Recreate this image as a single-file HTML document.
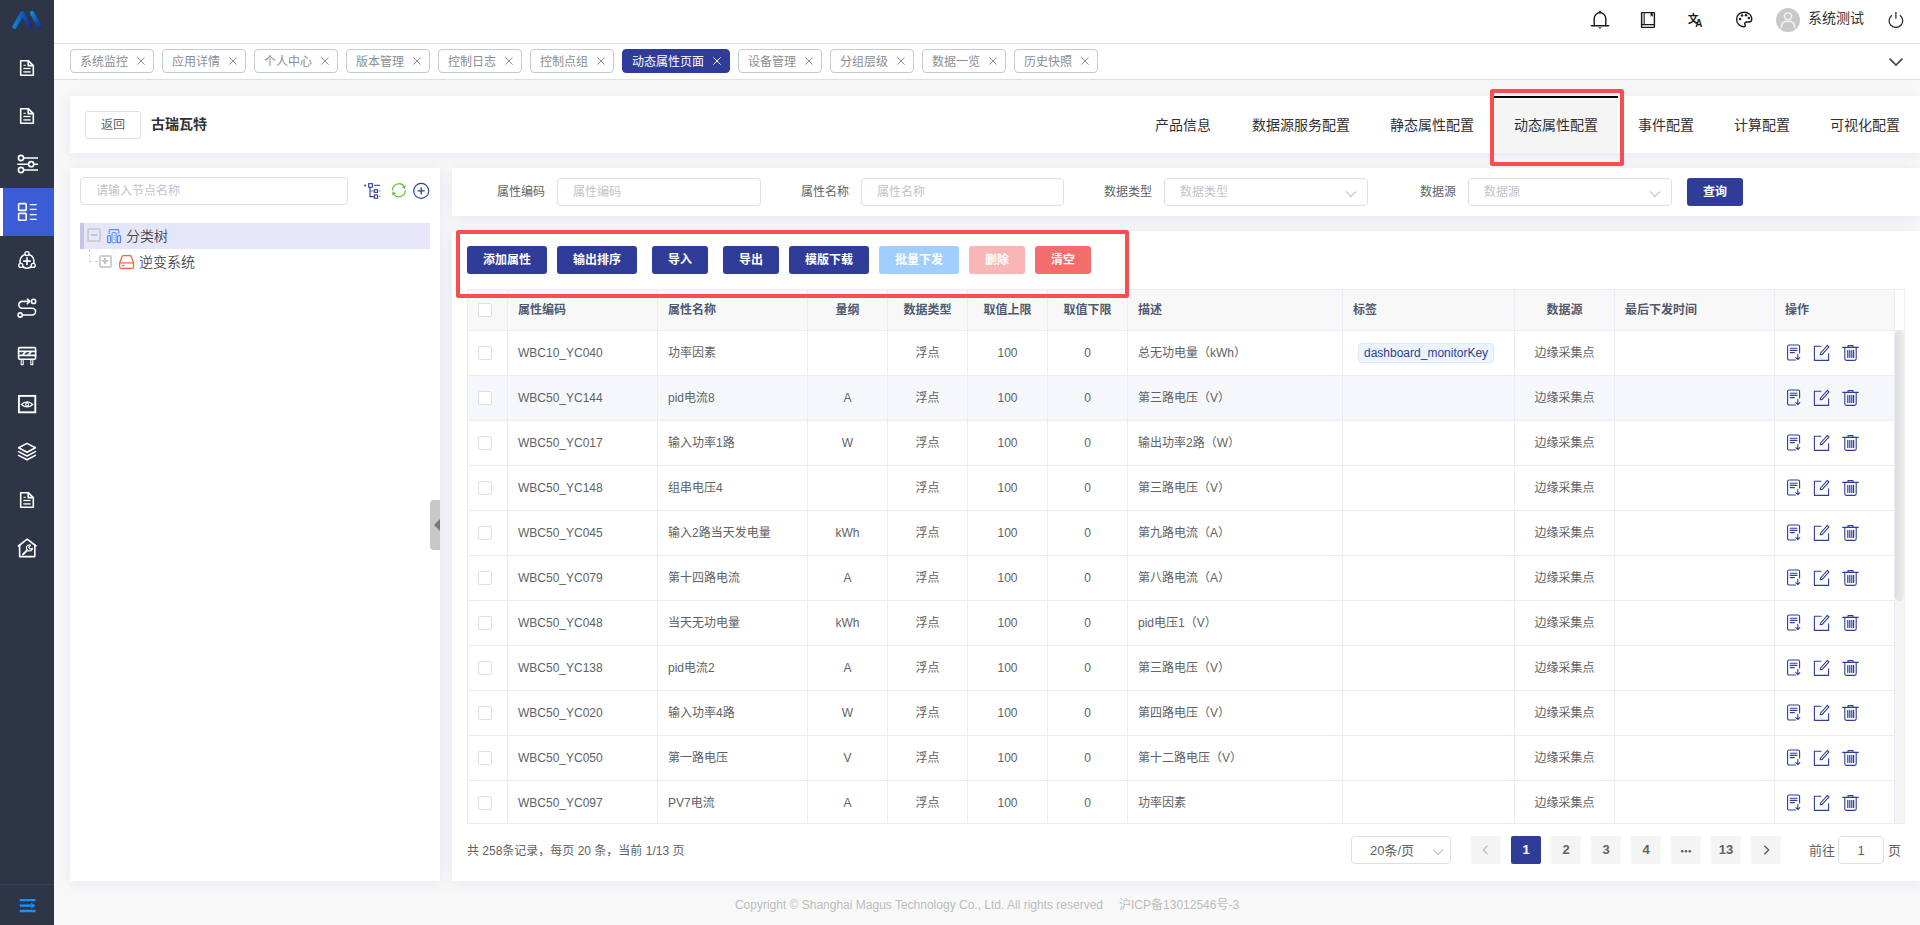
<!DOCTYPE html>
<html lang="zh-CN">
<head>
<meta charset="utf-8">
<title>动态属性配置</title>
<style>
*{box-sizing:border-box;margin:0;padding:0}
html,body{width:1920px;height:925px;overflow:hidden}
body{position:relative;background:#f8f8f9;font-family:"Liberation Sans","Noto Sans CJK SC",sans-serif;font-size:12px;color:#606266}
svg{display:block}
b{font-weight:normal}
i,em,s,u{font-style:normal;text-decoration:none}

/* sidebar */
.side{position:absolute;left:0;top:0;width:54px;height:925px;background:#2d3546}
.logo{position:absolute;left:12px;top:9px}
.mi{position:absolute;left:0;width:54px;height:48px}
.mi svg{position:absolute;left:16px;top:13px}
.mi.act{background:#3c5cd6;border-left:3px solid #fff}
.mi.act svg{left:13px}
.sfoot{position:absolute;left:0;top:884px;width:54px;height:41px;border-top:1px solid #37445f}
.sfoot svg{position:absolute;left:19px;top:13px}

/* top */
.top{position:absolute;left:54px;top:0;width:1866px;height:44px;background:#fff;border-bottom:1px solid #dce3f0}
.ti{position:absolute;top:9px;width:20px;height:20px;margin-left:-54px}
.avatar{position:absolute;left:1722px;top:8px;width:24px;height:24px;border-radius:50%;background:#c9c9c9;overflow:hidden}
.uname{position:absolute;left:1754px;top:8px;font-size:14px;line-height:20px;color:#303133}

/* tags */
.tags{position:absolute;left:54px;top:44px;width:1866px;height:36px;background:#fff;border-bottom:1px solid #dce3f0}
.tag{position:absolute;top:5px;height:24px;margin-left:-54px;border:1px solid #c6c9d0;border-radius:4px;background:#fff;color:#8c8e93;font-size:12px;line-height:24px;padding-left:9px;white-space:nowrap}
.tag i{position:absolute;right:7px;top:6px}
.tag.on{background:#2f3d99;border-color:#2f3d99;color:#fff}
.tagmore{position:absolute;left:1834px;top:13px}

/* cards */
.card{position:absolute;background:#fff;box-shadow:0 2px 12px 0 rgba(150,160,200,.18)}
.hcard{left:70px;top:96px;width:1850px;height:57px}
.back{position:absolute;left:15px;top:15px;width:56px;height:28px;border:1px solid #dcdfe6;border-radius:3px;text-align:center;line-height:26px;font-size:12px;color:#606266}
.ptitle{position:absolute;left:81px;top:17px;font-size:14px;line-height:22px;font-weight:bold;color:#303133}
.ptab{position:absolute;top:0;height:57px;line-height:58px;text-align:center;font-size:14px;color:#303133;margin-left:-70px}
.ptab.on{background:linear-gradient(#fff,#fff 1px,#f5f5f5 1px);border-top:2px solid #000;line-height:54px}

.lpanel{left:70px;top:168px;width:370px;height:713px}
.inp{position:absolute;height:28px;border:1px solid #dcdfe6;border-radius:4px;background:#fff;color:#c0c4cc;font-size:12px;line-height:27px;padding-left:15px;white-space:nowrap}
.tsearch{left:10px;top:9px;width:268px}
.tic{position:absolute}
.trow{position:absolute;height:26px;line-height:26px;font-size:14px;color:#484848;font-weight:350}
.trow svg{position:absolute}
.trow span{position:absolute;white-space:nowrap}
.root{left:10px;top:55px;width:350px;background:#e6e6fa;border-left:4px solid #c5c5e6}
.root svg{left:23px;top:5.8px}
.root span{left:42px;top:0}
.child{left:10px;top:81px;width:350px}
.child svg{left:38.5px;top:5.5px}
.child span{left:59px;top:0}
.tg{position:absolute;width:14px;height:14px;border:2px solid #cfcfcf;border-radius:2px}
.tg:before{content:"";position:absolute;left:2px;top:4px;width:6px;height:2px;background:#c4c4c4}
.tg.pl:after{content:"";position:absolute;left:4px;top:2px;width:2px;height:6px;background:#c4c4c4}
.root .tg{left:2.5px;top:5px}
.child .tg{left:18.5px;top:5.5px;width:13.5px;height:13.5px;background:#fff}
.child .tg:before{left:1.8px;top:3.8px}
.child .tg.pl:after{left:3.8px;top:1.8px}
.tline{position:absolute;left:19px;top:81px;width:9px;height:13px;border-left:1px dashed #d4d4d4;border-bottom:1px dashed #d4d4d4}
.handle{position:absolute;left:360px;top:332px;width:10px;height:50px;background:#c8c8c8;border-radius:4px 0 0 4px}
.handle s{position:absolute;left:4px;top:19px;border:6px solid transparent;border-left:0;border-right:6px solid #7a7a7a}

.fcard{left:452px;top:168px;width:1468px;height:48px}
.fcard label{position:absolute;top:10px;height:28px;line-height:29px;text-align:right;font-size:12px;color:#606266}
.fcard .inp{top:10px}
.sel svg{position:absolute;right:10px;top:10.5px}
.psize svg{right:6.5px;top:11px}
.btn{position:absolute;height:28px;border-radius:3px;color:#fff;font-size:12px;font-weight:bold;line-height:29px;text-align:center}
.pri{background:#2f3d99}
.lblue{background:#a0cfff}
.lred{background:#fab6b6}
.btn.red{background:#f56c6c}

.tcard{left:452px;top:231px;width:1468px;height:650px}
.twrap{position:absolute;left:15px;top:58px;width:1438px;height:535px;overflow:hidden;border:1px solid #eaedf6}
table{border-collapse:separate;border-spacing:0;table-layout:fixed;width:1427px;font-size:12px;color:#606266}
th,td{border-right:1px solid #eaedf6;border-bottom:1px solid #eaedf6;padding:0 10px;text-align:left;white-space:nowrap;overflow:hidden;vertical-align:middle}
th{height:41px;padding-bottom:2px;background:#f8f8f9;color:#515a6e;font-weight:bold}
td{height:45px}
tr.hov td{background:#f5f7fa}
.c{text-align:center}
.z{position:relative;top:0;line-height:0}
th .z{top:1px}
th:first-child,td:first-child{padding:0}
.cb{display:block;width:14px;height:14px;border:1px solid #dcdfe6;border-radius:2px;background:#fff;margin:0 0 0 10px}
.chip{display:inline-block;height:20px;line-height:18px;padding:0 5px;border:1px solid #d9ecff;border-radius:3px;background:#ecf5ff;color:#2f3d99;font-size:12px;margin-left:5px}
td.op{padding:0 0 0 11px}
td.op svg{display:inline-block;vertical-align:middle;margin-right:11px}
td.op svg+svg{margin-right:12px}
.vbar{position:absolute;left:1443px;top:99px;width:9px;height:493px;background:#f5f5f5;border-top:1px solid #eaedf6}
.vbar s{position:absolute;left:0;top:0;width:9px;height:270px;background:linear-gradient(90deg,#dedede,#ececec);border-radius:5px}

.pager{position:absolute;left:0;top:605px;width:1468px;height:28px}
.ptotal{position:absolute;left:15px;top:1px;line-height:28px;font-size:12px;color:#606266}
.psize{left:899px;top:0;width:100px;font-size:13px;color:#606266;padding-left:18px}
.pb{position:absolute;top:0;width:30px;height:28px;border-radius:2px;background:#f4f4f5;color:#606266;font-size:13px;font-weight:bold;line-height:28px;text-align:center}
.pb svg{margin:8px auto 0}
.pb.cur{background:#2f3d99;color:#fff}
.pgo{position:absolute;left:1357px;top:1px;line-height:28px;font-size:13px;color:#606266}
.pgin{left:1386px;top:0;width:46px;padding:0;text-align:center;color:#606266;font-size:13px}
.pgy{position:absolute;left:1436px;top:1px;line-height:28px;font-size:13px;color:#606266}

.anno{position:absolute;border:4px solid #f84e50;border-radius:2.5px}
.foot{position:absolute;left:54px;top:895px;width:1866px;text-align:center;font-size:12px;line-height:20px;color:#bcbcbc;white-space:nowrap}
.foot span{margin-left:16px}
</style>
</head>
<body>
<div class="side">
<div class="logo"><svg width="32" height="24" viewBox="0 0 32 24" ><defs><linearGradient id="lg1" gradientUnits="userSpaceOnUse" x1="2" y1="18" x2="19" y2="18"><stop offset="0" stop-color="#0a8ade"/><stop offset=".45" stop-color="#0f5cc0"/><stop offset="1" stop-color="#1a2a90"/></linearGradient><linearGradient id="lg2" gradientUnits="userSpaceOnUse" x1="19" y1="4" x2="29" y2="18"><stop offset="0" stop-color="#0a8ade"/><stop offset="1" stop-color="#1a2a90"/></linearGradient></defs><path d="M2.6 17.6 L10.4 4.2 L18.6 17.8" fill="none" stroke="url(#lg1)" stroke-width="4.3" stroke-linecap="round" stroke-linejoin="round"/><path d="M19.9 4 L27.9 18" fill="none" stroke="url(#lg2)" stroke-width="4.3" stroke-linecap="round"/></svg></div>
<div class="mi" style="top:44px"><svg width="22" height="22" viewBox="0 0 22 22" ><path d="M4.7 3.7 H12.2 L17.3 8.6 V18.3 H4.7 Z" fill="none" stroke="#fff" stroke-width="1.6" stroke-linecap="round" stroke-linejoin="round" stroke-width="1.35"/><path d="M12.2 3.7 V8.6 H17.3" fill="none" stroke="#fff" stroke-width="1.6" stroke-linecap="round" stroke-linejoin="round" stroke-width="1.1"/><path d="M7.4 8.3 H10" stroke="#fff" stroke-width="1.2" opacity=".75"/><path d="M7.4 11.5 H14.6" stroke="#fff" stroke-width="1.3"/><path d="M7.4 14.9 H14.6" stroke="#fff" stroke-width="1.8" opacity=".75"/></svg></div>
<div class="mi" style="top:92px"><svg width="22" height="22" viewBox="0 0 22 22" ><path d="M4.7 3.7 H12.2 L17.3 8.6 V18.3 H4.7 Z" fill="none" stroke="#fff" stroke-width="1.6" stroke-linecap="round" stroke-linejoin="round" stroke-width="1.35"/><path d="M12.2 3.7 V8.6 H17.3" fill="none" stroke="#fff" stroke-width="1.6" stroke-linecap="round" stroke-linejoin="round" stroke-width="1.1"/><path d="M7.4 8.3 H10" stroke="#fff" stroke-width="1.2" opacity=".75"/><path d="M7.4 11.5 H14.6" stroke="#fff" stroke-width="1.3"/><path d="M7.4 14.9 H14.6" stroke="#fff" stroke-width="1.8" opacity=".75"/></svg></div>
<div class="mi" style="top:140px"><svg width="22" height="22" viewBox="0 0 22 22" ><g fill="none" stroke="#fff" stroke-width="1.6" stroke-linecap="round" stroke-linejoin="round"><circle cx="5" cy="5" r="2.6"/><path d="M7.8 5 H21.6"/><circle cx="15.2" cy="11.2" r="2.6"/><path d="M1.8 11.2 H12.4 M18 11.2 H21.6"/><circle cx="5" cy="17" r="2.6"/><path d="M7.8 17 H21.6"/></g></svg></div>
<div class="mi act" style="top:188px"><svg width="22" height="22" viewBox="0 0 22 22" ><g fill="none" stroke="#fff" stroke-width="1.6" stroke-linecap="round" stroke-linejoin="round"><rect x="2.6" y="2.6" width="7.6" height="6.8" rx="0.8"/><rect x="2.6" y="12.4" width="7.6" height="6.8" rx="0.8"/></g><path d="M13.8 3.6 H20.6 M13.8 8.4 H20.6 M13.8 13.6 H20.6 M13.8 18.4 H20.6" stroke="#fff" stroke-width="1.4"/></svg></div>
<div class="mi" style="top:236px"><svg width="22" height="22" viewBox="0 0 22 22" ><g fill="none" stroke="#fff" stroke-width="1.6" stroke-linecap="round" stroke-linejoin="round" stroke-width="1.5"><circle cx="11" cy="12.2" r="7"/><path d="M11 8.8 V15.4 M7.7 12.1 H14.3"/></g><g fill="#2d3548" stroke="#fff" stroke-width="1.4"><circle cx="11" cy="4.6" r="2"/><circle cx="4.8" cy="16.4" r="2"/><circle cx="17.2" cy="16.4" r="2"/></g></svg></div>
<div class="mi" style="top:284px"><svg width="22" height="22" viewBox="0 0 22 22" ><g fill="none" stroke="#fff" stroke-width="1.6" stroke-linecap="round" stroke-linejoin="round"><path d="M6.4 18 H16.2 A3.4 3.4 0 0 0 16.2 11.2 H6.2 A3.4 3.4 0 0 1 6.2 4.4 H13.4"/><path d="M11.4 2.2 L13.8 4.4 L11.4 6.6"/><circle cx="4.2" cy="18" r="2.1"/><circle cx="17.6" cy="4.4" r="2.1"/></g></svg></div>
<div class="mi" style="top:332px"><svg width="22" height="22" viewBox="0 0 22 22" ><g fill="none" stroke="#fff" stroke-width="1.6" stroke-linecap="round" stroke-linejoin="round" stroke-width="1.5"><rect x="2.6" y="2.6" width="17" height="11.6" rx="1.2"/><path d="M2.6 6.4 H19.6 M2.6 10.4 H19.6"/><path d="M6.4 10.2 L9.6 6.6 M12 10.2 L15.2 6.6"/><path d="M5.2 14.4 V19.6 H7.2 V14.4 M14.8 14.4 V19.6 H16.8 V14.4" stroke-width="1.1"/></g></svg></div>
<div class="mi" style="top:380px"><svg width="22" height="22" viewBox="0 0 22 22" ><rect x="2.9" y="2.9" width="16.4" height="16.4" fill="none" stroke="#fff" stroke-width="1.9"/><path d="M5.4 11.4 Q11 6.4 16.8 11.4 Q11 16.2 5.4 11.4 Z" fill="none" stroke="#fff" stroke-width="1.3"/><circle cx="11.1" cy="11.4" r="1.5" fill="none" stroke="#fff" stroke-width="1.1"/></svg></div>
<div class="mi" style="top:428px"><svg width="22" height="22" viewBox="0 0 22 22" ><g fill="none" stroke="#fff" stroke-width="1.6" stroke-linecap="round" stroke-linejoin="round" stroke-width="1.4"><path d="M11 2.4 L19.4 6.8 L11 11.2 L2.6 6.8 Z"/><path d="M2.6 10.6 L11 15 L19.4 10.6"/><path d="M2.6 14.4 L11 18.8 L19.4 14.4"/></g></svg></div>
<div class="mi" style="top:476px"><svg width="22" height="22" viewBox="0 0 22 22" ><path d="M4.7 3.7 H12.2 L17.3 8.6 V18.3 H4.7 Z" fill="none" stroke="#fff" stroke-width="1.6" stroke-linecap="round" stroke-linejoin="round" stroke-width="1.35"/><path d="M12.2 3.7 V8.6 H17.3" fill="none" stroke="#fff" stroke-width="1.6" stroke-linecap="round" stroke-linejoin="round" stroke-width="1.1"/><path d="M7.4 8.3 H10" stroke="#fff" stroke-width="1.2" opacity=".75"/><path d="M7.4 11.5 H14.6" stroke="#fff" stroke-width="1.3"/><path d="M7.4 14.9 H14.6" stroke="#fff" stroke-width="1.8" opacity=".75"/></svg></div>
<div class="mi" style="top:524px"><svg width="22" height="22" viewBox="0 0 22 22" ><g fill="none" stroke="#fff" stroke-width="1.6" stroke-linecap="round" stroke-linejoin="round" stroke-width="1.5"><path d="M2.4 9 L11.2 2.2 L20 9"/><path d="M3.6 8.4 V19.6 H18.8 V8.4"/><path d="M7 17.4 L11.2 13.2" stroke-width="2"/><path d="M14.6 8.2 A3 3 0 1 0 16.4 11.4 L14 12 L12.8 10.4 Z" stroke-width="1.2"/></g></svg></div>
<div class="sfoot"><svg width="17" height="16" viewBox="0 0 17 16" ><path d="M0.8 2.1 H16.6 M0.8 13 H16.6" stroke="#1890ff" stroke-width="2.4"/><path d="M0.8 7.6 H12" stroke="#1890ff" stroke-width="2.4"/><path d="M12.2 4.8 L16.6 7.6 L12.2 10.4 Z" fill="#1890ff"/></svg></div>
</div>
<div class="top">
<span class="ti" style="left:1590px"><svg width="20" height="22" viewBox="0 0 20 22" ><g fill="none" stroke="#1a1a1a" stroke-width="1.4" stroke-linejoin="round" stroke-linecap="round"><path d="M4.2 16.6 V9.6 A5.8 5.8 0 0 1 15.8 9.6 V16.6"/><path d="M1.4 16.8 H18.6"/></g><path d="M9 3.2 L10 1.8 L11 3.2 Z" fill="#1a1a1a" stroke="#1a1a1a" stroke-width=".8"/><path d="M8.6 18.6 H11.4 L10 19.8 Z" fill="#555" stroke="#555" stroke-width=".6"/></svg></span>
<span class="ti" style="left:1638px"><svg width="20" height="22" viewBox="0 0 20 22" ><g fill="none" stroke="#1a1a1a" stroke-width="1.4" stroke-linejoin="round" stroke-linecap="round" stroke-width="1.2"><rect x="3.6" y="3.6" width="12.8" height="14.8" rx=".6"/><path d="M3.6 15.6 H16.4"/><path d="M6.2 3.6 V15.6" stroke-width="1"/></g><path d="M4.4 4.2 H5.8 V15 H4.4 Z" fill="#999"/><path d="M12.6 3.6 H14.8 V8 L13.7 6.4 L12.6 8 Z" fill="#1a1a1a"/></svg></span>
<span class="ti" style="left:1686px"><svg width="20" height="22" viewBox="0 0 20 22" ><text x="1.8" y="13.6" font-family="Liberation Sans,Noto Sans CJK SC,sans-serif" font-size="10.8" font-weight="bold" fill="#1a1a1a">文</text><text x="0" y="0" transform="translate(9.2 17.7) scale(.9 1)" font-family="Liberation Sans,sans-serif" font-size="11" font-weight="bold" fill="#1a1a1a">A</text></svg></span>
<span class="ti" style="left:1734px"><svg width="20" height="22" viewBox="0 0 20 22" ><path d="M10.2 3.2 C5.6 3.2 2.6 6.4 2.6 10.2 C2.6 14.6 6 17.6 9.6 17.8 C11.4 17.9 11.6 16.6 11 15.6 C10.2 14.2 11 13 12.6 13 H15 C16.8 13 17.8 11.6 17.8 9.8 C17.8 6.2 14.6 3.2 10.2 3.2 Z" fill="none" stroke="#1a1a1a" stroke-width="1.4" stroke-linejoin="round" stroke-linecap="round" stroke-width="1.3"/><g fill="#1a1a1a"><circle cx="6" cy="10" r="1.25"/><circle cx="8" cy="6.6" r="1.25"/><circle cx="12" cy="6.2" r="1.25"/><circle cx="14.8" cy="9" r="1.25"/></g></svg></span>
<span class="avatar"><svg width="24" height="24" viewBox="0 0 24 24" ><g fill="none" stroke="#f2f2f2" stroke-width="1.6"><circle cx="12" cy="8.3" r="3.5"/><path d="M5.4 20 C5.4 15 8 13 12 13 C16 13 18.6 15 18.6 20"/></g></svg></span>
<span class="uname">系统测试</span>
<span class="ti" style="left:1886px"><svg width="20" height="22" viewBox="0 0 20 22" ><g fill="none" stroke="#2a2a2a" stroke-width="1.25" stroke-linecap="butt"><path d="M13.9 6.2 A6.8 6.8 0 1 1 5.9 6.2"/><path d="M9.9 3.1 V9.8"/></g></svg></span>
</div>
<div class="tags">
<span class="tag" style="left:70px;width:84px"><b>系统监控</b><i><svg width="10" height="10" viewBox="0 0 10 10" ><path d="M1.4 1.4 L8.6 8.6 M8.6 1.4 L1.4 8.6" stroke="currentColor" stroke-width="1" fill="none"/></svg></i></span>
<span class="tag" style="left:162px;width:84px"><b>应用详情</b><i><svg width="10" height="10" viewBox="0 0 10 10" ><path d="M1.4 1.4 L8.6 8.6 M8.6 1.4 L1.4 8.6" stroke="currentColor" stroke-width="1" fill="none"/></svg></i></span>
<span class="tag" style="left:254px;width:84px"><b>个人中心</b><i><svg width="10" height="10" viewBox="0 0 10 10" ><path d="M1.4 1.4 L8.6 8.6 M8.6 1.4 L1.4 8.6" stroke="currentColor" stroke-width="1" fill="none"/></svg></i></span>
<span class="tag" style="left:346px;width:84px"><b>版本管理</b><i><svg width="10" height="10" viewBox="0 0 10 10" ><path d="M1.4 1.4 L8.6 8.6 M8.6 1.4 L1.4 8.6" stroke="currentColor" stroke-width="1" fill="none"/></svg></i></span>
<span class="tag" style="left:438px;width:84px"><b>控制日志</b><i><svg width="10" height="10" viewBox="0 0 10 10" ><path d="M1.4 1.4 L8.6 8.6 M8.6 1.4 L1.4 8.6" stroke="currentColor" stroke-width="1" fill="none"/></svg></i></span>
<span class="tag" style="left:530px;width:84px"><b>控制点组</b><i><svg width="10" height="10" viewBox="0 0 10 10" ><path d="M1.4 1.4 L8.6 8.6 M8.6 1.4 L1.4 8.6" stroke="currentColor" stroke-width="1" fill="none"/></svg></i></span>
<span class="tag on" style="left:622px;width:108px"><b>动态属性页面</b><i><svg width="10" height="10" viewBox="0 0 10 10" ><path d="M1.4 1.4 L8.6 8.6 M8.6 1.4 L1.4 8.6" stroke="currentColor" stroke-width="1" fill="none"/></svg></i></span>
<span class="tag" style="left:738px;width:84px"><b>设备管理</b><i><svg width="10" height="10" viewBox="0 0 10 10" ><path d="M1.4 1.4 L8.6 8.6 M8.6 1.4 L1.4 8.6" stroke="currentColor" stroke-width="1" fill="none"/></svg></i></span>
<span class="tag" style="left:830px;width:84px"><b>分组层级</b><i><svg width="10" height="10" viewBox="0 0 10 10" ><path d="M1.4 1.4 L8.6 8.6 M8.6 1.4 L1.4 8.6" stroke="currentColor" stroke-width="1" fill="none"/></svg></i></span>
<span class="tag" style="left:922px;width:84px"><b>数据一览</b><i><svg width="10" height="10" viewBox="0 0 10 10" ><path d="M1.4 1.4 L8.6 8.6 M8.6 1.4 L1.4 8.6" stroke="currentColor" stroke-width="1" fill="none"/></svg></i></span>
<span class="tag" style="left:1014px;width:84px"><b>历史快照</b><i><svg width="10" height="10" viewBox="0 0 10 10" ><path d="M1.4 1.4 L8.6 8.6 M8.6 1.4 L1.4 8.6" stroke="currentColor" stroke-width="1" fill="none"/></svg></i></span>
<span class="tagmore"><svg width="16" height="10" viewBox="0 0 16 10" ><path d="M1.6 1.6 L8 8 L14.4 1.6" stroke="#444" stroke-width="1.6" fill="none"/></svg></span>
</div>
<div class="card hcard">
<span class="back">返回</span><span class="ptitle">古瑞瓦特</span>
<span class="ptab" style="left:1103px;width:160px">产品信息</span>
<span class="ptab" style="left:1221px;width:160px">数据源服务配置</span>
<span class="ptab" style="left:1352px;width:160px">静态属性配置</span>
<span class="ptab on" style="left:1494px;width:124px">动态属性配置</span>
<span class="ptab" style="left:1586px;width:160px">事件配置</span>
<span class="ptab" style="left:1682px;width:160px">计算配置</span>
<span class="ptab" style="left:1785px;width:160px">可视化配置</span>
</div>
<div class="card lpanel">
<span class="inp tsearch">请输入节点名称</span>
<span class="tic" style="left:292px;top:13px"><svg width="20" height="20" viewBox="0 0 20 20" ><g fill="none" stroke="#2f3d99" stroke-width="1.1"><rect x="6.65" y="2.65" width="3.7" height="3.6"/><rect x="12.25" y="8.75" width="3.3" height="2.6"/><rect x="12.25" y="13.95" width="3.3" height="3.3"/><path d="M8 6.6 V15.6 H11.8"/><path d="M8 10 H11.8" opacity=".6"/><path d="M11.9 4.3 H18.2" stroke-width="1"/></g><circle cx="17.8" cy="10" r=".6" fill="#2f3d99"/><circle cx="17.8" cy="15.5" r=".6" fill="#2f3d99"/><path d="M1.8 3.8 H4.5 L3.15 6 Z" fill="#2f3d99"/></svg></span>
<span class="tic" style="left:320px;top:13px"><svg width="18" height="20" viewBox="0 0 18 20" ><g fill="none" stroke="#6fc23e" stroke-width="1.25" stroke-linecap="round"><path d="M2.5 9 A6.4 6.4 0 0 1 14.2 5.6"/><path d="M15.3 9.6 A6.4 6.4 0 0 1 3.6 13"/></g><path d="M15.8 4.2 L15.2 8 L11.6 6.4 Z" fill="#6fc23e"/><path d="M2 14.4 L2.6 10.6 L6.2 12.2 Z" fill="#6fc23e"/></svg></span>
<span class="tic" style="left:342px;top:14px"><svg width="18" height="18" viewBox="0 0 18 18" ><g fill="none" stroke="#2f3d99" stroke-width="1.15"><circle cx="9.2" cy="8.9" r="7.5"/><path d="M9.2 5.5 V12.4 M5.6 8.9 H12.7" stroke-width="1.3"/></g></svg></span>
<div class="trow root"><em class="tg minus"></em><svg width="15" height="15" viewBox="0 0 15 15" ><g fill="none" stroke-width="1.2" stroke-linejoin="round"><path d="M2.2 5 V1.6 Q2.2 .7 3.1 .7 H10.9 Q11.8 .7 11.8 1.6 V5" stroke="#5a8dff"/><rect x=".6" y="6.6" width="3" height="7" rx=".9" stroke="#4d84ff"/><rect x="10.5" y="6.6" width="3" height="7" rx=".9" stroke="#4d84ff"/><rect x="5" y="3.6" width="4.2" height="10" rx=".9" stroke="#6f9bff"/></g><path d="M6.2 6.3 H8 M6.2 8.4 H8 M6.2 10.5 H8" stroke="#8fb0ff" stroke-width="1"/></svg><span>分类树</span></div>
<div class="tline"></div>
<div class="trow child"><em class="tg pl"></em><svg width="16" height="15" viewBox="0 0 16 15" ><g fill="none" stroke="#f4623f" stroke-width="1.2" stroke-linejoin="round"><path d="M.7 8 L3 1.7 Q3.35 .7 4.4 .7 H10.9 Q11.95 .7 12.3 1.7 L14.6 8 V11.7 Q14.6 13.3 13 13.3 H2.3 Q.7 13.3 .7 11.7 Z"/><path d="M.7 7.9 H14.6"/></g><path d="M2.8 10.7 H5.4" stroke="#f4623f" stroke-width="1.2"/></svg><span>逆变系统</span></div>
<div class="handle"><s></s></div>
</div>
<div class="card fcard">
<label style="left:0;width:93px">属性编码</label><span class="inp" style="left:105px;width:204px">属性编码</span>
<label style="left:300px;width:97px">属性名称</label><span class="inp" style="left:409px;width:203px">属性名称</span>
<label style="left:600px;width:100px">数据类型</label><span class="inp sel" style="left:712px;width:204px">数据类型<svg width="12" height="8" viewBox="0 0 12 8" ><path d="M1 1.4 L6 6.4 L11 1.4" stroke="#c0c4cc" stroke-width="1.1" fill="none"/></svg></span>
<label style="left:900px;width:104px">数据源</label><span class="inp sel" style="left:1016px;width:204px">数据源<svg width="12" height="8" viewBox="0 0 12 8" ><path d="M1 1.4 L6 6.4 L11 1.4" stroke="#c0c4cc" stroke-width="1.1" fill="none"/></svg></span>
<span class="btn pri" style="left:1235px;top:10px;width:56px">查询</span>
</div>
<div class="card tcard">
<span class="btn pri" style="left:15px;top:15px;width:80px">添加属性</span>
<span class="btn pri" style="left:105px;top:15px;width:80px">输出排序</span>
<span class="btn pri" style="left:200px;top:15px;width:56px">导入</span>
<span class="btn pri" style="left:271px;top:15px;width:56px">导出</span>
<span class="btn pri" style="left:337px;top:15px;width:80px">模版下载</span>
<span class="btn lblue" style="left:427px;top:15px;width:80px">批量下发</span>
<span class="btn lred" style="left:517px;top:15px;width:56px">删除</span>
<span class="btn red" style="left:583px;top:15px;width:56px">清空</span>
<div class="twrap">
<table>
<colgroup><col style="width:40px"><col style="width:150px"><col style="width:150px"><col style="width:80px"><col style="width:80px"><col style="width:80px"><col style="width:80px"><col style="width:215px"><col style="width:172px"><col style="width:100px"><col style="width:160px"><col style="width:120px"></colgroup>
<thead><tr><th><u class="cb"></u></th><th><span class="z">属性编码</span></th><th><span class="z">属性名称</span></th><th class="c"><span class="z">量纲</span></th><th class="c"><span class="z">数据类型</span></th><th class="c"><span class="z">取值上限</span></th><th class="c"><span class="z">取值下限</span></th><th><span class="z">描述</span></th><th><span class="z">标签</span></th><th class="c"><span class="z">数据源</span></th><th><span class="z">最后下发时间</span></th><th><span class="z">操作</span></th></tr></thead>
<tbody>
<tr><td><u class="cb"></u></td><td>WBC10_YC040</td><td><span class="z">功率因素</span></td><td class="c"></td><td class="c"><span class="z">浮点</span></td><td class="c">100</td><td class="c">0</td><td><span class="z">总无功电量（</span>kWh<span class="z">）</span></td><td class="tg2"><span class="chip">dashboard_monitorKey</span></td><td class="c"><span class="z">边缘采集点</span></td><td></td><td class="op"><svg width="16" height="18" viewBox="0 0 16 18" ><g fill="none" stroke="#2f3d99" stroke-width="1.1" stroke-linejoin="round" stroke-linecap="round"><path d="M9.4 16 H3.2 Q1.6 16 1.6 14.4 V2.6 Q1.6 1 3.2 1 H12 Q13.6 1 13.6 2.6 V9"/><path d="M4.2 4.2 H11 M4.2 6.4 H11 M4.2 8.6 H8.4"/><path d="M11.8 10.4 V15.4 M9.8 13.6 L11.8 15.6 L13.8 13.6"/></g></svg><svg width="17" height="18" viewBox="0 0 17 18" ><g fill="none" stroke="#2f3d99" stroke-width="1.1" stroke-linejoin="round" stroke-linecap="round" stroke-width="1.3"><path d="M8 2.2 H1.4 V16.4 H15.6 V9.8"/><path d="M7.6 9 L14.4 1.4 L16 2.8 L9.2 10.4 L7.2 10.8 Z"/></g></svg><svg width="17" height="18" viewBox="0 0 17 18" ><g fill="none" stroke="#2f3d99" stroke-width="1.1" stroke-linejoin="round" stroke-linecap="round"><path d="M0.8 3.4 H16.2" stroke-width="1.2"/><path d="M6 3.2 V1.6 H11 V3.2"/><path d="M2.8 3.6 V14.8 Q2.8 16.4 4.4 16.4 H12.6 Q14.2 16.4 14.2 14.8 V3.6"/><path d="M5.8 6.4 V13.4 M7.8 6.4 V13.4 M9.8 6.4 V13.4 M11.6 6.4 V13.4" stroke-width="1.2"/></g></svg></td></tr>
<tr class="hov"><td><u class="cb"></u></td><td>WBC50_YC144</td><td>pid<span class="z">电流</span>8</td><td class="c">A</td><td class="c"><span class="z">浮点</span></td><td class="c">100</td><td class="c">0</td><td><span class="z">第三路电压（</span>V<span class="z">）</span></td><td class="tg2"></td><td class="c"><span class="z">边缘采集点</span></td><td></td><td class="op"><svg width="16" height="18" viewBox="0 0 16 18" ><g fill="none" stroke="#2f3d99" stroke-width="1.1" stroke-linejoin="round" stroke-linecap="round"><path d="M9.4 16 H3.2 Q1.6 16 1.6 14.4 V2.6 Q1.6 1 3.2 1 H12 Q13.6 1 13.6 2.6 V9"/><path d="M4.2 4.2 H11 M4.2 6.4 H11 M4.2 8.6 H8.4"/><path d="M11.8 10.4 V15.4 M9.8 13.6 L11.8 15.6 L13.8 13.6"/></g></svg><svg width="17" height="18" viewBox="0 0 17 18" ><g fill="none" stroke="#2f3d99" stroke-width="1.1" stroke-linejoin="round" stroke-linecap="round" stroke-width="1.3"><path d="M8 2.2 H1.4 V16.4 H15.6 V9.8"/><path d="M7.6 9 L14.4 1.4 L16 2.8 L9.2 10.4 L7.2 10.8 Z"/></g></svg><svg width="17" height="18" viewBox="0 0 17 18" ><g fill="none" stroke="#2f3d99" stroke-width="1.1" stroke-linejoin="round" stroke-linecap="round"><path d="M0.8 3.4 H16.2" stroke-width="1.2"/><path d="M6 3.2 V1.6 H11 V3.2"/><path d="M2.8 3.6 V14.8 Q2.8 16.4 4.4 16.4 H12.6 Q14.2 16.4 14.2 14.8 V3.6"/><path d="M5.8 6.4 V13.4 M7.8 6.4 V13.4 M9.8 6.4 V13.4 M11.6 6.4 V13.4" stroke-width="1.2"/></g></svg></td></tr>
<tr><td><u class="cb"></u></td><td>WBC50_YC017</td><td><span class="z">输入功率</span>1<span class="z">路</span></td><td class="c">W</td><td class="c"><span class="z">浮点</span></td><td class="c">100</td><td class="c">0</td><td><span class="z">输出功率</span>2<span class="z">路（</span>W<span class="z">）</span></td><td class="tg2"></td><td class="c"><span class="z">边缘采集点</span></td><td></td><td class="op"><svg width="16" height="18" viewBox="0 0 16 18" ><g fill="none" stroke="#2f3d99" stroke-width="1.1" stroke-linejoin="round" stroke-linecap="round"><path d="M9.4 16 H3.2 Q1.6 16 1.6 14.4 V2.6 Q1.6 1 3.2 1 H12 Q13.6 1 13.6 2.6 V9"/><path d="M4.2 4.2 H11 M4.2 6.4 H11 M4.2 8.6 H8.4"/><path d="M11.8 10.4 V15.4 M9.8 13.6 L11.8 15.6 L13.8 13.6"/></g></svg><svg width="17" height="18" viewBox="0 0 17 18" ><g fill="none" stroke="#2f3d99" stroke-width="1.1" stroke-linejoin="round" stroke-linecap="round" stroke-width="1.3"><path d="M8 2.2 H1.4 V16.4 H15.6 V9.8"/><path d="M7.6 9 L14.4 1.4 L16 2.8 L9.2 10.4 L7.2 10.8 Z"/></g></svg><svg width="17" height="18" viewBox="0 0 17 18" ><g fill="none" stroke="#2f3d99" stroke-width="1.1" stroke-linejoin="round" stroke-linecap="round"><path d="M0.8 3.4 H16.2" stroke-width="1.2"/><path d="M6 3.2 V1.6 H11 V3.2"/><path d="M2.8 3.6 V14.8 Q2.8 16.4 4.4 16.4 H12.6 Q14.2 16.4 14.2 14.8 V3.6"/><path d="M5.8 6.4 V13.4 M7.8 6.4 V13.4 M9.8 6.4 V13.4 M11.6 6.4 V13.4" stroke-width="1.2"/></g></svg></td></tr>
<tr><td><u class="cb"></u></td><td>WBC50_YC148</td><td><span class="z">组串电压</span>4</td><td class="c"></td><td class="c"><span class="z">浮点</span></td><td class="c">100</td><td class="c">0</td><td><span class="z">第三路电压（</span>V<span class="z">）</span></td><td class="tg2"></td><td class="c"><span class="z">边缘采集点</span></td><td></td><td class="op"><svg width="16" height="18" viewBox="0 0 16 18" ><g fill="none" stroke="#2f3d99" stroke-width="1.1" stroke-linejoin="round" stroke-linecap="round"><path d="M9.4 16 H3.2 Q1.6 16 1.6 14.4 V2.6 Q1.6 1 3.2 1 H12 Q13.6 1 13.6 2.6 V9"/><path d="M4.2 4.2 H11 M4.2 6.4 H11 M4.2 8.6 H8.4"/><path d="M11.8 10.4 V15.4 M9.8 13.6 L11.8 15.6 L13.8 13.6"/></g></svg><svg width="17" height="18" viewBox="0 0 17 18" ><g fill="none" stroke="#2f3d99" stroke-width="1.1" stroke-linejoin="round" stroke-linecap="round" stroke-width="1.3"><path d="M8 2.2 H1.4 V16.4 H15.6 V9.8"/><path d="M7.6 9 L14.4 1.4 L16 2.8 L9.2 10.4 L7.2 10.8 Z"/></g></svg><svg width="17" height="18" viewBox="0 0 17 18" ><g fill="none" stroke="#2f3d99" stroke-width="1.1" stroke-linejoin="round" stroke-linecap="round"><path d="M0.8 3.4 H16.2" stroke-width="1.2"/><path d="M6 3.2 V1.6 H11 V3.2"/><path d="M2.8 3.6 V14.8 Q2.8 16.4 4.4 16.4 H12.6 Q14.2 16.4 14.2 14.8 V3.6"/><path d="M5.8 6.4 V13.4 M7.8 6.4 V13.4 M9.8 6.4 V13.4 M11.6 6.4 V13.4" stroke-width="1.2"/></g></svg></td></tr>
<tr><td><u class="cb"></u></td><td>WBC50_YC045</td><td><span class="z">输入</span>2<span class="z">路当天发电量</span></td><td class="c">kWh</td><td class="c"><span class="z">浮点</span></td><td class="c">100</td><td class="c">0</td><td><span class="z">第九路电流（</span>A<span class="z">）</span></td><td class="tg2"></td><td class="c"><span class="z">边缘采集点</span></td><td></td><td class="op"><svg width="16" height="18" viewBox="0 0 16 18" ><g fill="none" stroke="#2f3d99" stroke-width="1.1" stroke-linejoin="round" stroke-linecap="round"><path d="M9.4 16 H3.2 Q1.6 16 1.6 14.4 V2.6 Q1.6 1 3.2 1 H12 Q13.6 1 13.6 2.6 V9"/><path d="M4.2 4.2 H11 M4.2 6.4 H11 M4.2 8.6 H8.4"/><path d="M11.8 10.4 V15.4 M9.8 13.6 L11.8 15.6 L13.8 13.6"/></g></svg><svg width="17" height="18" viewBox="0 0 17 18" ><g fill="none" stroke="#2f3d99" stroke-width="1.1" stroke-linejoin="round" stroke-linecap="round" stroke-width="1.3"><path d="M8 2.2 H1.4 V16.4 H15.6 V9.8"/><path d="M7.6 9 L14.4 1.4 L16 2.8 L9.2 10.4 L7.2 10.8 Z"/></g></svg><svg width="17" height="18" viewBox="0 0 17 18" ><g fill="none" stroke="#2f3d99" stroke-width="1.1" stroke-linejoin="round" stroke-linecap="round"><path d="M0.8 3.4 H16.2" stroke-width="1.2"/><path d="M6 3.2 V1.6 H11 V3.2"/><path d="M2.8 3.6 V14.8 Q2.8 16.4 4.4 16.4 H12.6 Q14.2 16.4 14.2 14.8 V3.6"/><path d="M5.8 6.4 V13.4 M7.8 6.4 V13.4 M9.8 6.4 V13.4 M11.6 6.4 V13.4" stroke-width="1.2"/></g></svg></td></tr>
<tr><td><u class="cb"></u></td><td>WBC50_YC079</td><td><span class="z">第十四路电流</span></td><td class="c">A</td><td class="c"><span class="z">浮点</span></td><td class="c">100</td><td class="c">0</td><td><span class="z">第八路电流（</span>A<span class="z">）</span></td><td class="tg2"></td><td class="c"><span class="z">边缘采集点</span></td><td></td><td class="op"><svg width="16" height="18" viewBox="0 0 16 18" ><g fill="none" stroke="#2f3d99" stroke-width="1.1" stroke-linejoin="round" stroke-linecap="round"><path d="M9.4 16 H3.2 Q1.6 16 1.6 14.4 V2.6 Q1.6 1 3.2 1 H12 Q13.6 1 13.6 2.6 V9"/><path d="M4.2 4.2 H11 M4.2 6.4 H11 M4.2 8.6 H8.4"/><path d="M11.8 10.4 V15.4 M9.8 13.6 L11.8 15.6 L13.8 13.6"/></g></svg><svg width="17" height="18" viewBox="0 0 17 18" ><g fill="none" stroke="#2f3d99" stroke-width="1.1" stroke-linejoin="round" stroke-linecap="round" stroke-width="1.3"><path d="M8 2.2 H1.4 V16.4 H15.6 V9.8"/><path d="M7.6 9 L14.4 1.4 L16 2.8 L9.2 10.4 L7.2 10.8 Z"/></g></svg><svg width="17" height="18" viewBox="0 0 17 18" ><g fill="none" stroke="#2f3d99" stroke-width="1.1" stroke-linejoin="round" stroke-linecap="round"><path d="M0.8 3.4 H16.2" stroke-width="1.2"/><path d="M6 3.2 V1.6 H11 V3.2"/><path d="M2.8 3.6 V14.8 Q2.8 16.4 4.4 16.4 H12.6 Q14.2 16.4 14.2 14.8 V3.6"/><path d="M5.8 6.4 V13.4 M7.8 6.4 V13.4 M9.8 6.4 V13.4 M11.6 6.4 V13.4" stroke-width="1.2"/></g></svg></td></tr>
<tr><td><u class="cb"></u></td><td>WBC50_YC048</td><td><span class="z">当天无功电量</span></td><td class="c">kWh</td><td class="c"><span class="z">浮点</span></td><td class="c">100</td><td class="c">0</td><td>pid<span class="z">电压</span>1<span class="z">（</span>V<span class="z">）</span></td><td class="tg2"></td><td class="c"><span class="z">边缘采集点</span></td><td></td><td class="op"><svg width="16" height="18" viewBox="0 0 16 18" ><g fill="none" stroke="#2f3d99" stroke-width="1.1" stroke-linejoin="round" stroke-linecap="round"><path d="M9.4 16 H3.2 Q1.6 16 1.6 14.4 V2.6 Q1.6 1 3.2 1 H12 Q13.6 1 13.6 2.6 V9"/><path d="M4.2 4.2 H11 M4.2 6.4 H11 M4.2 8.6 H8.4"/><path d="M11.8 10.4 V15.4 M9.8 13.6 L11.8 15.6 L13.8 13.6"/></g></svg><svg width="17" height="18" viewBox="0 0 17 18" ><g fill="none" stroke="#2f3d99" stroke-width="1.1" stroke-linejoin="round" stroke-linecap="round" stroke-width="1.3"><path d="M8 2.2 H1.4 V16.4 H15.6 V9.8"/><path d="M7.6 9 L14.4 1.4 L16 2.8 L9.2 10.4 L7.2 10.8 Z"/></g></svg><svg width="17" height="18" viewBox="0 0 17 18" ><g fill="none" stroke="#2f3d99" stroke-width="1.1" stroke-linejoin="round" stroke-linecap="round"><path d="M0.8 3.4 H16.2" stroke-width="1.2"/><path d="M6 3.2 V1.6 H11 V3.2"/><path d="M2.8 3.6 V14.8 Q2.8 16.4 4.4 16.4 H12.6 Q14.2 16.4 14.2 14.8 V3.6"/><path d="M5.8 6.4 V13.4 M7.8 6.4 V13.4 M9.8 6.4 V13.4 M11.6 6.4 V13.4" stroke-width="1.2"/></g></svg></td></tr>
<tr><td><u class="cb"></u></td><td>WBC50_YC138</td><td>pid<span class="z">电流</span>2</td><td class="c">A</td><td class="c"><span class="z">浮点</span></td><td class="c">100</td><td class="c">0</td><td><span class="z">第三路电压（</span>V<span class="z">）</span></td><td class="tg2"></td><td class="c"><span class="z">边缘采集点</span></td><td></td><td class="op"><svg width="16" height="18" viewBox="0 0 16 18" ><g fill="none" stroke="#2f3d99" stroke-width="1.1" stroke-linejoin="round" stroke-linecap="round"><path d="M9.4 16 H3.2 Q1.6 16 1.6 14.4 V2.6 Q1.6 1 3.2 1 H12 Q13.6 1 13.6 2.6 V9"/><path d="M4.2 4.2 H11 M4.2 6.4 H11 M4.2 8.6 H8.4"/><path d="M11.8 10.4 V15.4 M9.8 13.6 L11.8 15.6 L13.8 13.6"/></g></svg><svg width="17" height="18" viewBox="0 0 17 18" ><g fill="none" stroke="#2f3d99" stroke-width="1.1" stroke-linejoin="round" stroke-linecap="round" stroke-width="1.3"><path d="M8 2.2 H1.4 V16.4 H15.6 V9.8"/><path d="M7.6 9 L14.4 1.4 L16 2.8 L9.2 10.4 L7.2 10.8 Z"/></g></svg><svg width="17" height="18" viewBox="0 0 17 18" ><g fill="none" stroke="#2f3d99" stroke-width="1.1" stroke-linejoin="round" stroke-linecap="round"><path d="M0.8 3.4 H16.2" stroke-width="1.2"/><path d="M6 3.2 V1.6 H11 V3.2"/><path d="M2.8 3.6 V14.8 Q2.8 16.4 4.4 16.4 H12.6 Q14.2 16.4 14.2 14.8 V3.6"/><path d="M5.8 6.4 V13.4 M7.8 6.4 V13.4 M9.8 6.4 V13.4 M11.6 6.4 V13.4" stroke-width="1.2"/></g></svg></td></tr>
<tr><td><u class="cb"></u></td><td>WBC50_YC020</td><td><span class="z">输入功率</span>4<span class="z">路</span></td><td class="c">W</td><td class="c"><span class="z">浮点</span></td><td class="c">100</td><td class="c">0</td><td><span class="z">第四路电压（</span>V<span class="z">）</span></td><td class="tg2"></td><td class="c"><span class="z">边缘采集点</span></td><td></td><td class="op"><svg width="16" height="18" viewBox="0 0 16 18" ><g fill="none" stroke="#2f3d99" stroke-width="1.1" stroke-linejoin="round" stroke-linecap="round"><path d="M9.4 16 H3.2 Q1.6 16 1.6 14.4 V2.6 Q1.6 1 3.2 1 H12 Q13.6 1 13.6 2.6 V9"/><path d="M4.2 4.2 H11 M4.2 6.4 H11 M4.2 8.6 H8.4"/><path d="M11.8 10.4 V15.4 M9.8 13.6 L11.8 15.6 L13.8 13.6"/></g></svg><svg width="17" height="18" viewBox="0 0 17 18" ><g fill="none" stroke="#2f3d99" stroke-width="1.1" stroke-linejoin="round" stroke-linecap="round" stroke-width="1.3"><path d="M8 2.2 H1.4 V16.4 H15.6 V9.8"/><path d="M7.6 9 L14.4 1.4 L16 2.8 L9.2 10.4 L7.2 10.8 Z"/></g></svg><svg width="17" height="18" viewBox="0 0 17 18" ><g fill="none" stroke="#2f3d99" stroke-width="1.1" stroke-linejoin="round" stroke-linecap="round"><path d="M0.8 3.4 H16.2" stroke-width="1.2"/><path d="M6 3.2 V1.6 H11 V3.2"/><path d="M2.8 3.6 V14.8 Q2.8 16.4 4.4 16.4 H12.6 Q14.2 16.4 14.2 14.8 V3.6"/><path d="M5.8 6.4 V13.4 M7.8 6.4 V13.4 M9.8 6.4 V13.4 M11.6 6.4 V13.4" stroke-width="1.2"/></g></svg></td></tr>
<tr><td><u class="cb"></u></td><td>WBC50_YC050</td><td><span class="z">第一路电压</span></td><td class="c">V</td><td class="c"><span class="z">浮点</span></td><td class="c">100</td><td class="c">0</td><td><span class="z">第十二路电压（</span>V<span class="z">）</span></td><td class="tg2"></td><td class="c"><span class="z">边缘采集点</span></td><td></td><td class="op"><svg width="16" height="18" viewBox="0 0 16 18" ><g fill="none" stroke="#2f3d99" stroke-width="1.1" stroke-linejoin="round" stroke-linecap="round"><path d="M9.4 16 H3.2 Q1.6 16 1.6 14.4 V2.6 Q1.6 1 3.2 1 H12 Q13.6 1 13.6 2.6 V9"/><path d="M4.2 4.2 H11 M4.2 6.4 H11 M4.2 8.6 H8.4"/><path d="M11.8 10.4 V15.4 M9.8 13.6 L11.8 15.6 L13.8 13.6"/></g></svg><svg width="17" height="18" viewBox="0 0 17 18" ><g fill="none" stroke="#2f3d99" stroke-width="1.1" stroke-linejoin="round" stroke-linecap="round" stroke-width="1.3"><path d="M8 2.2 H1.4 V16.4 H15.6 V9.8"/><path d="M7.6 9 L14.4 1.4 L16 2.8 L9.2 10.4 L7.2 10.8 Z"/></g></svg><svg width="17" height="18" viewBox="0 0 17 18" ><g fill="none" stroke="#2f3d99" stroke-width="1.1" stroke-linejoin="round" stroke-linecap="round"><path d="M0.8 3.4 H16.2" stroke-width="1.2"/><path d="M6 3.2 V1.6 H11 V3.2"/><path d="M2.8 3.6 V14.8 Q2.8 16.4 4.4 16.4 H12.6 Q14.2 16.4 14.2 14.8 V3.6"/><path d="M5.8 6.4 V13.4 M7.8 6.4 V13.4 M9.8 6.4 V13.4 M11.6 6.4 V13.4" stroke-width="1.2"/></g></svg></td></tr>
<tr><td><u class="cb"></u></td><td>WBC50_YC097</td><td>PV7<span class="z">电流</span></td><td class="c">A</td><td class="c"><span class="z">浮点</span></td><td class="c">100</td><td class="c">0</td><td><span class="z">功率因素</span></td><td class="tg2"></td><td class="c"><span class="z">边缘采集点</span></td><td></td><td class="op"><svg width="16" height="18" viewBox="0 0 16 18" ><g fill="none" stroke="#2f3d99" stroke-width="1.1" stroke-linejoin="round" stroke-linecap="round"><path d="M9.4 16 H3.2 Q1.6 16 1.6 14.4 V2.6 Q1.6 1 3.2 1 H12 Q13.6 1 13.6 2.6 V9"/><path d="M4.2 4.2 H11 M4.2 6.4 H11 M4.2 8.6 H8.4"/><path d="M11.8 10.4 V15.4 M9.8 13.6 L11.8 15.6 L13.8 13.6"/></g></svg><svg width="17" height="18" viewBox="0 0 17 18" ><g fill="none" stroke="#2f3d99" stroke-width="1.1" stroke-linejoin="round" stroke-linecap="round" stroke-width="1.3"><path d="M8 2.2 H1.4 V16.4 H15.6 V9.8"/><path d="M7.6 9 L14.4 1.4 L16 2.8 L9.2 10.4 L7.2 10.8 Z"/></g></svg><svg width="17" height="18" viewBox="0 0 17 18" ><g fill="none" stroke="#2f3d99" stroke-width="1.1" stroke-linejoin="round" stroke-linecap="round"><path d="M0.8 3.4 H16.2" stroke-width="1.2"/><path d="M6 3.2 V1.6 H11 V3.2"/><path d="M2.8 3.6 V14.8 Q2.8 16.4 4.4 16.4 H12.6 Q14.2 16.4 14.2 14.8 V3.6"/><path d="M5.8 6.4 V13.4 M7.8 6.4 V13.4 M9.8 6.4 V13.4 M11.6 6.4 V13.4" stroke-width="1.2"/></g></svg></td></tr>
</tbody>
</table>
</div>
<div class="vbar"><s></s></div>
<div class="pager">
<span class="ptotal">共 258条记录，每页 20 条，当前 1/13 页</span>
<span class="inp sel psize">20条/页<svg width="12" height="8" viewBox="0 0 12 8" ><path d="M1 1.4 L6 6.4 L11 1.4" stroke="#c0c4cc" stroke-width="1.1" fill="none"/></svg></span>
<span class="pb prev" style="left:1019px"><svg width="12" height="12" viewBox="0 0 12 12" ><path d="M7.6 1.8 L3.4 6 L7.6 10.2" stroke="#c0c4cc" stroke-width="1.5" fill="none"/></svg></span>
<span class="pb cur" style="left:1059px">1</span>
<span class="pb " style="left:1099px">2</span>
<span class="pb " style="left:1139px">3</span>
<span class="pb " style="left:1179px">4</span>
<span class="pb more" style="left:1219px"><svg width="12" height="12" viewBox="0 0 12 12" ><g fill="#606266"><circle cx="2.2" cy="7.2" r="1.3"/><circle cx="6" cy="7.2" r="1.3"/><circle cx="9.8" cy="7.2" r="1.3"/></g></svg></span>
<span class="pb " style="left:1259px">13</span>
<span class="pb next" style="left:1299px"><svg width="12" height="12" viewBox="0 0 12 12" ><path d="M4.4 1.8 L8.6 6 L4.4 10.2" stroke="#606266" stroke-width="1.5" fill="none"/></svg></span>
<span class="pgo">前往</span><span class="inp pgin">1</span><span class="pgy">页</span>
</div>
</div>
<div class="anno" style="left:1490px;top:89px;width:134px;height:77px"></div>
<div class="anno" style="left:456px;top:230px;width:673px;height:68px"></div>
<div class="foot">Copyright © Shanghai Magus Technology Co., Ltd. All rights reserved<span>沪ICP备13012546号-3</span></div>
</body>
</html>
